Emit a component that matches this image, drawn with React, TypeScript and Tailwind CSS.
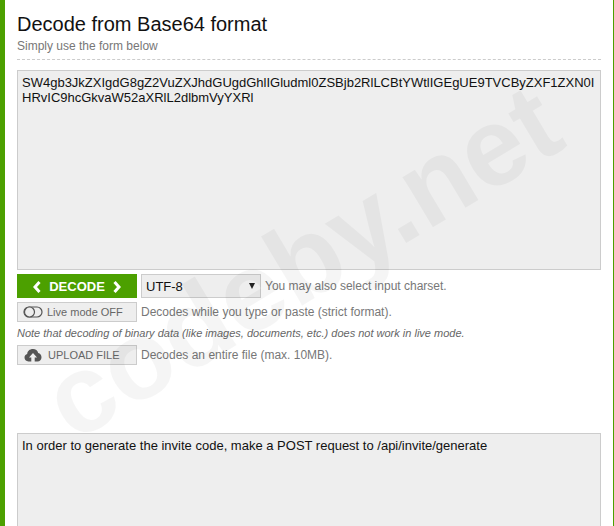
import React from "react";

const font = "font-['Liberation_Sans',Arial,sans-serif]";

function Chevron({ dir }: { dir: "l" | "r" }) {
  return (
    <svg width="8" height="12" viewBox="0 0 8 12" className="shrink-0">
      <path d={dir === "l" ? "M6.5 1 L2 6 L6.5 11" : "M1.5 1 L6 6 L1.5 11"} fill="none" stroke="#fff" strokeWidth="3" />
    </svg>
  );
}

export default function App() {
  return (
    <div className={`${font} relative h-[526px] w-[614px] overflow-hidden bg-white`}>
      <div className="flex h-full flex-col border-l-[5px] border-r-[1px] border-l-[#4ca000] border-r-[#4ca000] pl-3 pr-3">
        <h1 className="mt-[12px] shrink-0 text-[20px] leading-[24px] text-[#111]">Decode from Base64 format</h1>
        <p className="mt-[2px] shrink-0 text-[12px] leading-[16px] text-[#777]">Simply use the form below</p>
        <div className="mt-[5px] shrink-0 border-t border-dashed border-[#ccc]" />
        <div className="mt-[10px] h-[200px] shrink-0 border border-[#ccc] bg-[#eee] px-[4px] py-[4px] text-[13px] leading-[15px] text-[#111]">
          <div>SW4gb3JkZXIgdG8gZ2VuZXJhdGUgdGhlIGludml0ZSBjb2RlLCBtYWtlIGEgUE9TVCByZXF1ZXN0I</div>
          <div>HRvIC9hcGkvaW52aXRlL2dlbmVyYXRl</div>
        </div>
        <div className="mt-[4px] flex h-[24px] shrink-0 items-center">
          <div className="flex h-[24px] w-[120px] items-center justify-center gap-[8px] bg-[#4ca000] pt-[1px] text-[13px] font-bold text-white">
            <Chevron dir="l" />
            <span>DECODE</span>
            <Chevron dir="r" />
          </div>
          <div className="relative ml-[4px] flex h-[24px] w-[120px] items-center border border-[#ccc] bg-[#eee] pl-[4px] pt-[1px] text-[13px] text-[#111]">
            UTF-8
            <span className="absolute right-[5px] top-[8px] h-0 w-0 border-x-[3.5px] border-t-[6px] border-x-transparent border-t-[#222]" />
          </div>
          <span className="ml-[4px] text-[12px] text-[#777]">You may also select input charset.</span>
        </div>
        <div className="mt-[4px] flex h-[20px] shrink-0 items-center">
          <div className="flex h-[20px] w-[120px] items-center border border-[#ccc] bg-[#eee] pl-[5px] text-[11px] text-[#666]">
            <svg width="20" height="12" viewBox="0 0 20 12" className="shrink-0">
              <rect x="1" y="1" width="18" height="10" rx="5" fill="none" stroke="#555" strokeWidth="1.2" />
              <circle cx="6.5" cy="6" r="5" fill="#eee" stroke="#555" strokeWidth="1.2" />
            </svg>
            <span className="ml-[4px]">Live mode OFF</span>
          </div>
          <span className="ml-[4px] text-[12px] text-[#777]">Decodes while you type or paste (strict format).</span>
        </div>
        <p className="mt-[3px] shrink-0 text-[11px] italic leading-[16px] text-[#666]">Note that decoding of binary data (like images, documents, etc.) does not work in live mode.</p>
        <div className="mt-[4px] flex h-[20px] shrink-0 items-center">
          <div className="flex h-[20px] w-[120px] items-center border border-[#ccc] bg-[#eee] pl-[6px] text-[11px] text-[#666]">
            <svg width="18" height="14" viewBox="0 0 18 14" className="shrink-0">
              <path fillRule="evenodd" fill="#555" d="M4.5 13.5 C2 13.5 .5 11.8 .5 9.6 C.5 7.8 1.6 6.5 3.2 6 C3.3 3.2 5.6 1 9 1 C11.6 1 13.6 2.6 14.2 4.9 C16.2 5.3 17.5 7 17.5 9.2 C17.5 11.7 15.8 13.5 13.5 13.5 H10.7 V9.5 H13 L9 5 L5 9.5 H7.3 V13.5 Z" />
            </svg>
            <span className="ml-[6px]">UPLOAD FILE</span>
          </div>
          <span className="ml-[4px] text-[12px] text-[#777]">Decodes an entire file (max. 10MB).</span>
        </div>
        <div className="mt-[68px] h-[100px] shrink-0 border border-[#ccc] bg-[#eee] px-[4px] py-[4px] text-[13px] leading-[15px] text-[#111]">
          In order to generate the invite code, make a POST request to /api/invite/generate
        </div>
      </div>
      <div className="pointer-events-none absolute left-[302px] top-[262px] -translate-x-1/2 -translate-y-1/2 -rotate-[31deg] whitespace-nowrap text-[111px] font-bold leading-none text-black/[0.04]">
        codeby.net
      </div>
    </div>
  );
}
